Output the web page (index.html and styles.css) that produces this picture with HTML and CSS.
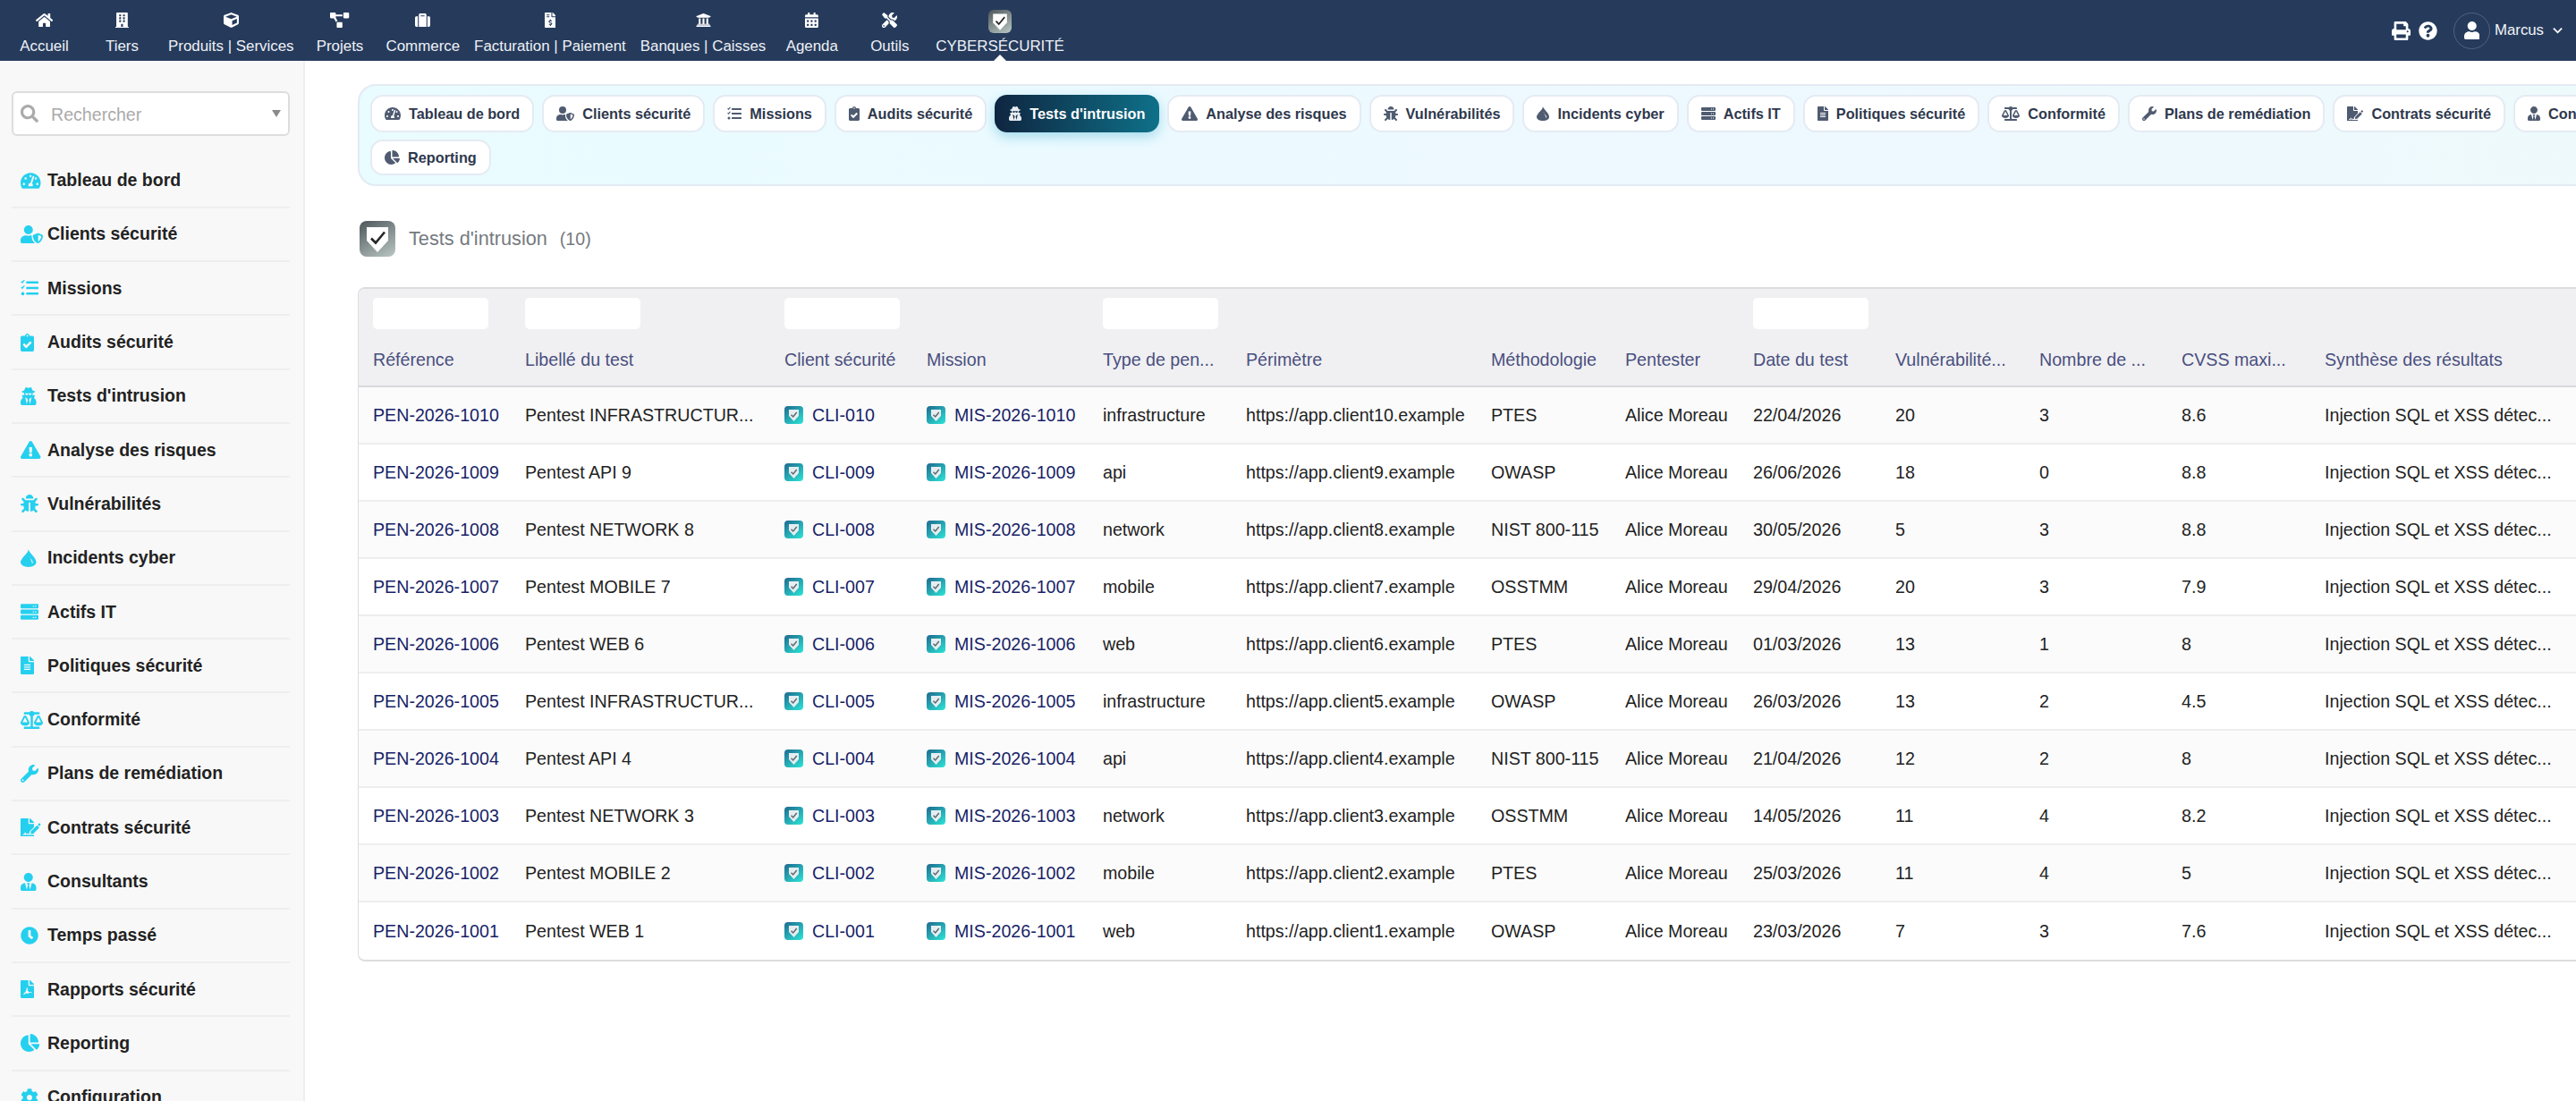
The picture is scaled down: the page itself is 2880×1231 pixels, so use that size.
FILE: index.html
```html
<!DOCTYPE html>
<html lang="fr">
<head>
<meta charset="utf-8">
<title>Tests d'intrusion</title>
<link rel="stylesheet" href="styles.css">
</head>
<body>
<svg class="sprite" width="0" height="0" aria-hidden="true">
<defs>
<linearGradient id="gGray" x1="0.2" y1="0" x2="0.8" y2="1"><stop offset="0" stop-color="#555f63"/><stop offset="1" stop-color="#b3bfbc"/></linearGradient>
<linearGradient id="gTeal" x1="0.1" y1="0" x2="0.9" y2="1"><stop offset="0" stop-color="#1f6f92"/><stop offset="1" stop-color="#2be0d4"/></linearGradient>
<symbol id="shield-check" viewBox="0 0 40 40"><path d="M8 7h24v15L20 35 8 22z" fill="#fff"/><path d="M13 19.5l5 5 10-12" fill="none" stroke="#262626" stroke-width="2.6"/></symbol>
<symbol id="shield-soft" viewBox="0 0 40 40"><path d="M9 8h22v14L20 34 9 22z" fill="#e6edf0"/><path d="M14 19.5l4.5 4.5 8-10" fill="none" stroke="#5d6a70" stroke-width="3"/></symbol>
<g id="i-home"><path d="M280.37 148.26L96 300.11V464a16 16 0 0 0 16 16l112.06-.29a16 16 0 0 0 15.92-16V368a16 16 0 0 1 16-16h64a16 16 0 0 1 16 16v95.64a16 16 0 0 0 16 16.05L464 480a16 16 0 0 0 16-16V300L295.67 148.26a12.19 12.19 0 0 0-15.3 0zM571.6 251.47L488 182.56V44.05a12 12 0 0 0-12-12h-56a12 12 0 0 0-12 12v72.61L318.47 43a48 48 0 0 0-61 0L4.34 251.47a12 12 0 0 0-1.6 16.9l25.5 31A12 12 0 0 0 45.15 301l235.22-193.74a12.19 12.19 0 0 1 15.3 0L530.9 301a12 12 0 0 0 16.9-1.6l25.5-31a12 12 0 0 0-1.7-16.93z"/></g>
<g id="i-building"><path d="M436 480h-20V24c0-13.255-10.745-24-24-24H56C42.745 0 32 10.745 32 24v456H12c-6.627 0-12 5.373-12 12v20h448v-20c0-6.627-5.373-12-12-12zM128 76c0-6.627 5.373-12 12-12h40c6.627 0 12 5.373 12 12v40c0 6.627-5.373 12-12 12h-40c-6.627 0-12-5.373-12-12V76zm0 96c0-6.627 5.373-12 12-12h40c6.627 0 12 5.373 12 12v40c0 6.627-5.373 12-12 12h-40c-6.627 0-12-5.373-12-12v-40zm52 148h-40c-6.627 0-12-5.373-12-12v-40c0-6.627 5.373-12 12-12h40c6.627 0 12 5.373 12 12v40c0 6.627-5.373 12-12 12zm76 160h-64v-84c0-6.627 5.373-12 12-12h40c6.627 0 12 5.373 12 12v84zm64-172c0 6.627-5.373 12-12 12h-40c-6.627 0-12-5.373-12-12v-40c0-6.627 5.373-12 12-12h40c6.627 0 12 5.373 12 12v40zm0-96c0 6.627-5.373 12-12 12h-40c-6.627 0-12-5.373-12-12v-40c0-6.627 5.373-12 12-12h40c6.627 0 12 5.373 12 12v40zm0-96c0 6.627-5.373 12-12 12h-40c-6.627 0-12-5.373-12-12V76c0-6.627 5.373-12 12-12h40c6.627 0 12 5.373 12 12v40z"/></g>
<g id="i-cube"><path d="M239.1 6.3l-208 78c-18.7 7-31.1 25-31.1 45v225.1c0 18.2 10.3 34.8 26.5 42.9l208 104c13.5 6.8 29.4 6.8 42.9 0l208-104c16.3-8.1 26.5-24.8 26.5-42.9V129.3c0-20-12.4-37.9-31.1-44.9l-208-78C262 2.2 250 2.2 239.1 6.3zM256 68.4l192 72v1.1l-192 78-192-78v-1.1l192-72zm32 356V275.5l160-65v133.9l-160 80z"/></g>
<g id="i-diagram"><path d="M384 320H256c-17.67 0-32 14.33-32 32v128c0 17.67 14.33 32 32 32h128c17.67 0 32-14.33 32-32V352c0-17.67-14.33-32-32-32zM192 32c0-17.67-14.33-32-32-32H32C14.33 0 0 14.33 0 32v128c0 17.67 14.33 32 32 32h95.72l73.16 128.04C211.98 300.98 232.4 288 256 288h.28L192 175.51V128h224V64H192V32zM608 0H480c-17.67 0-32 14.33-32 32v128c0 17.67 14.33 32 32 32h128c17.67 0 32-14.33 32-32V32c0-17.67-14.33-32-32-32z"/></g>
<g id="i-suitcase"><path d="M128 480h256V80c0-26.5-21.5-48-48-48H176c-26.5 0-48 21.5-48 48v400zm64-384h128v32H192V96zm320 80v256c0 26.5-21.5 48-48 48h-48V128h48c26.5 0 48 21.5 48 48zM96 480H48c-26.5 0-48-21.5-48-48V176c0-26.5 21.5-48 48-48h48v352z"/></g>
<g id="i-invoice"><path d="M377 105L279.1 7c-4.5-4.5-10.6-7-17-7H256v128h128v-6.1c0-6.3-2.5-12.4-7-16.9zM224 136V0H24C10.7 0 0 10.7 0 24v464c0 13.3 10.7 24 24 24h336c13.3 0 24-10.7 24-24V160H248c-13.2 0-24-10.8-24-24zM64 72c0-4.4 3.6-8 8-8h80c4.4 0 8 3.6 8 8v16c0 4.4-3.6 8-8 8H72c-4.4 0-8-3.6-8-8V72zm0 80v-16c0-4.4 3.6-8 8-8h80c4.4 0 8 3.6 8 8v16c0 4.4-3.6 8-8 8H72c-4.4 0-8-3.6-8-8zm144 263.9V440c0 4.4-3.6 8-8 8h-16c-4.4 0-8-3.6-8-8v-24.3c-11.3-.6-22.3-4.5-31.4-11.4-3.9-2.9-4.1-8.8-.6-12.1l11.8-11.2c2.8-2.6 6.9-2.8 10.1-.7 3.9 2.4 8.3 3.7 12.8 3.7h28.1c6.5 0 11.8-5.9 11.8-13.2 0-6-3.6-11.2-8.8-12.8l-45-13.5c-18.6-5.6-31.6-23.4-31.6-43.4 0-24.5 19.1-44.4 42.8-45.1V240c0-4.4 3.6-8 8-8h16c4.4 0 8 3.6 8 8v24.3c11.3.6 22.3 4.5 31.4 11.4 3.9 2.9 4.1 8.8.6 12.1l-11.8 11.2c-2.8 2.6-6.9 2.8-10.1.7-3.9-2.4-8.3-3.7-12.8-3.7h-28.1c-6.5 0-11.8 5.9-11.8 13.2 0 6 3.6 11.2 8.8 12.8l45 13.5c18.6 5.6 31.6 23.4 31.6 43.4 0 24.5-19.1 44.4-42.8 45z"/></g>
<g id="i-bank"><path d="M496 128v16a8 8 0 0 1-8 8h-24v12c0 6.627-5.373 12-12 12H60c-6.627 0-12-5.373-12-12v-12H24a8 8 0 0 1-8-8v-16a8 8 0 0 1 4.941-7.392l232-88a7.996 7.996 0 0 1 6.118 0l232 88A8 8 0 0 1 496 128zm-24 304H40c-13.255 0-24 10.745-24 24v16a8 8 0 0 0 8 8h464a8 8 0 0 0 8-8v-16c0-13.255-10.745-24-24-24zM96 192v192H60c-6.627 0-12 5.373-12 12v20h416v-20c0-6.627-5.373-12-12-12h-36V192h-64v192h-64V192h-64v192h-64V192H96z"/></g>
<g id="i-calendar"><path d="M0 464c0 26.5 21.5 48 48 48h352c26.5 0 48-21.5 48-48V192H0v272zm320-196c0-6.6 5.4-12 12-12h40c6.6 0 12 5.4 12 12v40c0 6.6-5.4 12-12 12h-40c-6.6 0-12-5.4-12-12v-40zm0 128c0-6.6 5.4-12 12-12h40c6.6 0 12 5.4 12 12v40c0 6.6-5.4 12-12 12h-40c-6.6 0-12-5.4-12-12v-40zM192 268c0-6.6 5.4-12 12-12h40c6.6 0 12 5.4 12 12v40c0 6.6-5.4 12-12 12h-40c-6.6 0-12-5.4-12-12v-40zm0 128c0-6.6 5.4-12 12-12h40c6.6 0 12 5.4 12 12v40c0 6.6-5.4 12-12 12h-40c-6.6 0-12-5.4-12-12v-40zM64 268c0-6.6 5.4-12 12-12h40c6.6 0 12 5.4 12 12v40c0 6.6-5.4 12-12 12H76c-6.6 0-12-5.4-12-12v-40zm0 128c0-6.6 5.4-12 12-12h40c6.6 0 12 5.4 12 12v40c0 6.6-5.4 12-12 12H76c-6.6 0-12-5.4-12-12v-40zM400 64h-48V16c0-8.8-7.2-16-16-16h-32c-8.8 0-16 7.2-16 16v48H160V16c0-8.8-7.2-16-16-16h-32c-8.8 0-16 7.2-16 16v48H48C21.5 64 0 85.5 0 112v48h448v-48c0-26.5-21.5-48-48-48z"/></g>
<g id="i-tools"><path d="M501.1 395.7L384 278.6c-23.1-23.1-57.6-27.6-85.4-13.9L192 158.1V96L64 0 0 64l96 128h62.1l106.6 106.6c-13.6 27.8-9.2 62.3 13.9 85.4l117.1 117.1c14.6 14.6 38.2 14.6 52.7 0l52.7-52.7c14.5-14.6 14.5-38.2 0-52.7zM331.7 225c28.3 0 54.9 11 74.9 31l19.4 19.4c15.8-6.9 30.8-16.5 43.8-29.5 37.1-37.1 49.7-89.3 37.9-136.7-2.2-9-13.5-12.1-20.1-5.5l-74.4 74.4-67.9-11.3L334 98.9l74.4-74.4c6.6-6.6 3.4-17.9-5.7-20.2-47.4-11.7-99.6.9-136.6 37.9-28.5 28.5-41.9 66.1-41.2 103.6l82.1 82.1c8.1-1.9 16.5-2.9 24.7-2.9zm-103.9 82l-56.7-56.7L18.7 402.8c-25 25-25 65.5 0 90.5s65.5 25 90.5 0l123.6-123.6c-7.6-19.9-9.9-41.6-5-62.7zM64 472c-13.2 0-24-10.8-24-24 0-13.3 10.7-24 24-24s24 10.7 24 24c0 13.2-10.7 24-24 24z"/></g>
<g id="i-print"><path d="M448 192V77.25c0-8.49-3.37-16.62-9.37-22.63L393.37 9.37c-6-6-14.14-9.37-22.63-9.37H96C78.33 0 64 14.33 64 32v160c-35.35 0-64 28.65-64 64v112c0 8.84 7.16 16 16 16h48v96c0 17.67 14.33 32 32 32h320c17.67 0 32-14.33 32-32v-96h48c8.84 0 16-7.16 16-16V256c0-35.35-28.65-64-64-64zm-64 256H128v-96h256v96zm0-224H128V64h192v48c0 8.84 7.16 16 16 16h48v96zm48 72c-13.25 0-24-10.75-24-24 0-13.26 10.75-24 24-24s24 10.74 24 24c0 13.25-10.75 24-24 24z"/></g>
<g id="i-question"><path d="M504 256c0 136.997-111.043 248-248 248S8 392.997 8 256C8 119.083 119.043 8 256 8s248 111.083 248 248zM262.655 90c-54.497 0-89.255 22.957-116.549 63.758-3.536 5.286-2.353 12.415 2.715 16.258l34.699 26.31c5.205 3.947 12.621 3.008 16.665-2.122 17.864-22.658 30.113-35.797 57.303-35.797 20.429 0 45.698 13.148 45.698 32.958 0 14.976-12.363 22.667-32.534 33.976C247.128 238.528 216 254.941 216 296v4c0 6.627 5.373 12 12 12h56c6.627 0 12-5.373 12-12v-1.333c0-28.462 83.186-29.647 83.186-106.667 0-58.002-60.165-102-116.531-102zM256 338c-25.365 0-46 20.635-46 46 0 25.364 20.635 46 46 46s46-20.636 46-46c0-25.365-20.635-46-46-46z"/></g>
<g id="i-user"><path d="M224 256c70.7 0 128-57.3 128-128S294.7 0 224 0 96 57.3 96 128s57.3 128 128 128zm89.6 32h-16.7c-22.2 10.2-46.9 16-72.9 16s-50.6-5.8-72.9-16h-16.7C60.2 288 0 348.2 0 422.4V464c0 26.5 21.5 48 48 48h352c26.5 0 48-21.5 48-48v-41.6c0-74.2-60.2-134.4-134.4-134.4z"/></g>
<g id="i-search"><path d="M505 442.7L405.3 343c-4.5-4.5-10.6-7-17-7H372c27.6-35.3 44-79.7 44-128C416 93.1 322.9 0 208 0S0 93.1 0 208s93.1 208 208 208c48.3 0 92.7-16.4 128-44v16.3c0 6.4 2.5 12.5 7 17l99.7 99.7c9.4 9.4 24.6 9.4 33.9 0l28.3-28.3c9.4-9.4 9.4-24.6.1-34zM208 336c-70.7 0-128-57.2-128-128 0-70.7 57.2-128 128-128 70.7 0 128 57.2 128 128 0 70.7-57.2 128-128 128z"/></g>
<g id="i-gauge"><path d="M288 32C128.94 32 0 160.94 0 320c0 52.8 14.25 102.26 39.06 144.8 5.61 9.62 16.3 15.2 27.44 15.2h443c11.14 0 21.83-5.58 27.44-15.2C561.75 422.26 576 372.8 576 320c0-159.06-128.94-288-288-288zm0 64c14.71 0 26.58 10.13 30.32 23.65-1.11 2.26-2.64 4.23-3.45 6.67l-9.22 27.67c-5.13 3.49-10.97 6.01-17.64 6.01-17.67 0-32-14.33-32-32S270.33 96 288 96zM96 384c-17.67 0-32-14.33-32-32s14.33-32 32-32 32 14.33 32 32-14.33 32-32 32zm48-160c-17.67 0-32-14.33-32-32s14.33-32 32-32 32 14.33 32 32-14.33 32-32 32zm246.77-72.41l-61.33 184C343.13 347.33 352 364.54 352 384c0 11.72-3.38 22.55-8.88 32H232.88c-5.5-9.45-8.88-20.28-8.88-32 0-33.94 26.5-61.43 59.9-63.59l61.34-184.01c4.17-12.56 17.73-19.45 30.36-15.17 12.57 4.19 19.35 17.79 15.17 30.36zm14.66 57.2l15.52-46.55c3.47-1.29 7.13-2.23 11.05-2.23 17.67 0 32 14.33 32 32s-14.33 32-32 32c-11.38-.01-20.89-6.28-26.57-15.22zM480 384c-17.67 0-32-14.33-32-32s14.33-32 32-32 32 14.33 32 32-14.33 32-32 32z"/></g>
<g id="i-usershield"><path d="M224 256a128 128 0 1 0 0-256 128 128 0 0 0 0 256zM320 320c0-9 0-18 4-26-9-3-20-6-31-6h-17c-16 7-34 12-52 12s-36-5-52-12h-17C60 288 0 348 0 422v42c0 26 22 48 48 48h352c6 0 11-1 16-3-58-35-96-105-96-189z"/><path fill-rule="evenodd" d="M622 270l-115-45c-7-3-15-3-22 0l-115 45c-11 4-18 14-18 25 0 112 69 189 133 214 7 3 15 3 22 0 51-20 133-89 133-214 0-11-7-21-18-25zm-118 190V272l88 34c-2 80-50 132-88 154z"/></g>
<g id="i-tasks"><path d="M176 64h320a16 16 0 0 1 16 16v32a16 16 0 0 1-16 16H176a16 16 0 0 1-16-16V80a16 16 0 0 1 16-16zM176 224h320a16 16 0 0 1 16 16v32a16 16 0 0 1-16 16H176a16 16 0 0 1-16-16v-32a16 16 0 0 1 16-16zM176 384h320a16 16 0 0 1 16 16v32a16 16 0 0 1-16 16H176a16 16 0 0 1-16-16v-32a16 16 0 0 1 16-16z"/><circle cx="64" cy="416" r="48"/><path class="stroked" d="M18 72l32 30 60-72M18 232l32 30 60-72"/></g>
<g id="i-clipboard"><path d="M336 64h-80c0-35-29-64-64-64s-64 29-64 64H48C21 64 0 85 0 112v352c0 26 21 48 48 48h288c26 0 48-22 48-48V112c0-27-22-48-48-48zM192 40c13 0 24 11 24 24s-11 24-24 24-24-11-24-24 11-24 24-24zm121 230L169 413c-5 5-12 5-17 0l-83-84c-5-5-5-12 0-17l28-28c5-5 12-5 17 0l47 47 107-106c5-5 12-5 17 0l28 28c5 5 5 13 0 17z"/></g>
<g id="i-secret"><path d="M383.9 308.3l23.9-62.6c4-10.5-3.7-21.7-15-21.7h-58.5c11-18.9 17.8-40.6 17.8-64v-.3c39.2-7.8 64-19.1 64-31.7 0-13.3-27.3-25.1-70.1-33-9.2-32.8-27-65.8-40.6-82.8-9.5-11.9-25.9-15.6-39.5-8.8l-27.6 13.8c-9 4.5-19.6 4.5-28.6 0L182.1 3.4c-13.6-6.8-30-3.1-39.5 8.8-13.5 17-31.4 50-40.6 82.8-42.7 7.9-70 19.7-70 33 0 12.6 24.8 23.9 64 31.7v.3c0 23.4 6.8 45.1 17.8 64H56.3c-11.5 0-19.2 11.7-14.7 22.3l25.8 60.2C27.3 329.8 0 372.7 0 422.4v44.8C0 491.9 20.1 512 44.8 512h358.4c24.7 0 44.8-20.1 44.8-44.8v-44.8c0-48.4-25.8-90.4-64.1-114.1zM176 480l-41.6-192 49.6 32 24 40-32 120zm96 0l-32-120 24-40 49.6-32L272 480zm41.7-298.5c-3.9 11.9-7 24.6-16.5 33.4-10.1 9.3-48 22.4-64-25-2.8-8.4-15.4-8.4-18.3 0-17 50.2-56 32.4-64 25-9.5-8.8-12.7-21.5-16.5-33.4-.8-2.5-6.3-5.7-6.3-5.8v-10.8c28.3 3.6 61 5.8 96 5.8s67.7-2.1 96-5.8v10.8c-.1.1-5.6 3.2-6.4 5.8z"/></g>
<g id="i-warning"><path d="M569.517 440.013C587.975 472.007 564.806 512 527.94 512H48.054c-36.937 0-59.999-40.055-41.577-71.987L246.423 23.985c18.467-32.009 64.72-31.951 83.154 0l239.94 416.028zM288 354c-25.405 0-46 20.595-46 46s20.595 46 46 46 46-20.595 46-46-20.595-46-46-46zm-43.673-165.346l7.418 136c.347 6.364 5.609 11.346 11.982 11.346h48.546c6.373 0 11.635-4.982 11.982-11.346l7.418-136c.375-6.874-5.098-12.654-11.982-12.654h-63.383c-6.884 0-12.356 5.78-11.981 12.654z"/></g>
<g id="i-bug"><path d="M511.988 288.9c-.478 17.43-15.217 31.1-32.653 31.1H424v16c0 21.864-4.882 42.584-13.6 61.145l60.228 60.228c12.496 12.497 12.496 32.758 0 45.255-12.498 12.497-32.759 12.496-45.256 0l-54.736-54.736C345.886 467.965 314.351 480 280 480V236c0-6.627-5.373-12-12-12h-24c-6.627 0-12 5.373-12 12v244c-34.351 0-65.886-12.035-90.636-32.108l-54.736 54.736c-12.498 12.497-32.759 12.496-45.256 0-12.496-12.497-12.496-32.758 0-45.255l60.228-60.228C92.882 378.584 88 357.864 88 336v-16H32.666C15.23 320 .491 306.33.013 288.9-.484 270.816 14.028 256 32 256h56v-58.745l-46.628-46.628c-12.496-12.497-12.496-32.758 0-45.255 12.498-12.497 32.758-12.497 45.256 0L141.255 160h229.489l54.627-54.627c12.498-12.497 32.758-12.497 45.256 0 12.496 12.497 12.496 32.758 0 45.255L424 197.255V256h56c17.972 0 32.484 14.816 31.988 32.9zM257 0c-61.856 0-112 50.144-112 112h224C369 50.144 318.856 0 257 0z"/></g>
<g id="i-fire"><path fill-rule="evenodd" d="M216 0C240 90 110 170 60 250 20 310 0 340 0 372c0 80 100 140 224 140s224-60 224-140c0-130-170-230-232-372zM250 190c-10 70 100 110 100 180 0 20-8 36-20 50 4-70-50-120-80-230z"/></g>
<g id="i-server"><path fill-rule="evenodd" d="M32 32h448a32 32 0 0 1 32 32v64a32 32 0 0 1-32 32H32a32 32 0 0 1-32-32V64a32 32 0 0 1 32-32zM416 80v32h32V80zM352 80v32h32V80zM32 192h448a32 32 0 0 1 32 32v64a32 32 0 0 1-32 32H32a32 32 0 0 1-32-32v-64a32 32 0 0 1 32-32zM416 240v32h32v-32zM352 240v32h32v-32zM32 352h448a32 32 0 0 1 32 32v64a32 32 0 0 1-32 32H32a32 32 0 0 1-32-32v-64a32 32 0 0 1 32-32zM416 400v32h32v-32zM352 400v32h32v-32z"/></g>
<g id="i-file"><path d="M224 136V0H24C10.7 0 0 10.7 0 24v464c0 13.3 10.7 24 24 24h336c13.3 0 24-10.7 24-24V160H248c-13.2 0-24-10.8-24-24zm64 236c0 6.6-5.4 12-12 12H108c-6.6 0-12-5.4-12-12v-8c0-6.6 5.4-12 12-12h168c6.6 0 12 5.4 12 12v8zm0-64c0 6.6-5.4 12-12 12H108c-6.6 0-12-5.4-12-12v-8c0-6.6 5.4-12 12-12h168c6.6 0 12 5.4 12 12v8zm0-72v8c0 6.6-5.4 12-12 12H108c-6.6 0-12-5.4-12-12v-8c0-6.6 5.4-12 12-12h168c6.6 0 12 5.4 12 12zm96-114.1v6.1H256V0h6.1c6.4 0 12.5 2.5 17 7l97.9 98c4.5 4.5 7 10.6 7 16.9z"/></g>
<g id="i-scale"><path d="M256 336h-.02c0-16.18 1.34-8.73-85.05-181.51-17.65-35.29-68.19-35.36-85.87 0C-2.06 328.75.02 320.33.02 336H0c0 44.18 57.31 80 128 80s128-35.82 128-80zM128 176l72 144H56l72-144zm511.98 160c0-16.18 1.34-8.73-85.05-181.51-17.65-35.29-68.19-35.36-85.87 0-87.12 174.26-85.04 165.84-85.04 181.51H384c0 44.18 57.31 80 128 80s128-35.82 128-80h-.02zM440 320l72-144 72 144H440zm88 128H352V153.25c23.51-10.29 41.16-31.48 46.39-57.25H528c8.84 0 16-7.16 16-16V48c0-8.84-7.16-16-16-16H383.64C369.04 12.68 346.09 0 320 0s-49.04 12.68-63.64 32H112c-8.84 0-16 7.16-16 16v32c0 8.84 7.16 16 16 16h129.61c5.23 25.76 22.87 46.96 46.39 57.25V448H112c-8.84 0-16 7.16-16 16v32c0 8.84 7.16 16 16 16h416c8.84 0 16-7.16 16-16v-32c0-8.84-7.16-16-16-16z"/></g>
<g id="i-wrench"><path d="M507.73 109.1c-2.24-9.03-13.54-12.09-20.12-5.51l-74.36 74.36-67.88-11.31-11.31-67.88 74.36-74.36c6.62-6.62 3.43-17.9-5.66-20.16-47.38-11.74-99.55.91-136.58 37.93-39.64 39.64-50.55 97.1-34.05 147.2L18.74 402.76c-24.99 24.99-24.99 65.51 0 90.5 24.99 24.99 65.51 24.99 90.5 0l213.21-213.21c50.12 16.71 107.47 5.68 147.37-34.22 37.07-37.07 49.7-89.32 37.91-136.73zM64 472c-13.25 0-24-10.75-24-24 0-13.26 10.75-24 24-24s24 10.74 24 24c0 13.25-10.75 24-24 24z"/></g>
<g id="i-contract"><path fill-rule="evenodd" d="M0 24C0 11 11 0 24 0h200v136c0 13 11 24 24 24h136v90L270 364c-10 10-16 22-18 36l-6 48-24-4c-14-2-22-14-38-14-12 0-20 8-28 16l-16-44-20 4-16 42H64v32h24l14-34 14 32 10 2c14-2 26-18 40-20 12 2 22 12 38 16h180v40c0 9-11 16-24 16H24c-13 0-24-11-24-24z"/><path d="M256 0h6c6 0 12 2 17 7l98 98c4 5 7 11 7 17v6H256zM294 372L470 196l68 68-176 176-74 10zM490 176l30-30c9-9 24-9 33 0l16 16c9 9 9 24 0 33l-30 30z"/></g>
<g id="i-tie"><path d="M224 256c70.7 0 128-57.3 128-128S294.7 0 224 0 96 57.3 96 128s57.3 128 128 128zm95.8 32.6L272 480l-32-136 32-56h-96l32 56-32 136-47.8-191.4C56.9 292 0 350.3 0 422.4V464c0 26.5 21.5 48 48 48h352c26.5 0 48-21.5 48-48v-41.6c0-72.1-56.9-130.4-128.2-133.8z"/></g>
<g id="i-clock"><path d="M256 8C119 8 8 119 8 256s111 248 248 248 248-111 248-248S393 8 256 8zm57.1 350.1L224.9 294c-3.1-2.3-4.9-5.9-4.9-9.7V116c0-6.6 5.4-12 12-12h48c6.6 0 12 5.4 12 12v137.7l63.5 46.2c5.4 3.9 6.5 11.4 2.6 16.8l-28.2 38.8c-3.9 5.3-11.4 6.5-16.8 2.6z"/></g>
<g id="i-pdf"><path fill-rule="evenodd" d="M224 136V0H24C10.7 0 0 10.7 0 24v464c0 13.3 10.7 24 24 24h336c13.3 0 24-10.7 24-24V160H248c-13.2 0-24-10.8-24-24zM176 216h28l-4 76 42 50c30-4 68-4 84 8v16c-20-6-56-8-82-2-24 8-44 30-58 22l-30-22c-24 22-52 52-68 42l-8-10c14-26 40-46 60-56l24-68z"/><path d="M377 105L279 7c-4.5-4.5-10.6-7-17-7h-6v128h128v-6.1c0-6.3-2.5-12.4-7-16.9z"/></g>
<g id="i-pie"><path d="M527.79 288H290.5l158.03 158.03c6.04 6.04 15.98 6.53 22.19.68 38.7-36.46 65.32-85.61 73.13-140.86 1.34-9.46-6.51-17.85-16.06-17.85zm-15.83-64.8C503.72 103.74 408.26 8.28 288.8.04 279.68-.59 272 7.1 272 16.24V240h223.77c9.14 0 16.82-7.68 16.19-16.8zM224 288V50.71c0-9.55-8.39-17.4-17.84-16.06C86.99 51.49-4.1 155.6.14 280.37 4.5 408.51 114.83 513.59 243.03 511.98c50.4-.63 96.97-16.87 135.26-44.03 7.9-5.6 8.42-17.23 1.57-24.08L224 288z"/></g>
<g id="i-cog"><path d="M487.4 315.7l-42.6-24.6c4.3-23.2 4.3-47 0-70.2l42.6-24.6c4.9-2.8 7.1-8.6 5.5-14-11.1-35.6-30-67.8-54.7-94.6-3.8-4.1-10-5.1-14.8-2.3L380.8 110c-17.9-15.4-38.5-27.3-60.8-35.1V25.8c0-5.6-3.9-10.5-9.4-11.7-36.7-8.2-74.3-7.8-109.2 0-5.5 1.2-9.4 6.1-9.4 11.7V75c-22.2 7.9-42.8 19.8-60.8 35.1L88.7 85.5c-4.9-2.8-11-1.9-14.8 2.3-24.7 26.7-43.6 58.9-54.7 94.6-1.7 5.4.6 11.2 5.5 14L67.3 221c-4.3 23.2-4.3 47 0 70.2l-42.6 24.6c-4.9 2.8-7.1 8.6-5.5 14 11.1 35.6 30 67.8 54.7 94.6 3.8 4.1 10 5.1 14.8 2.3l42.6-24.6c17.9 15.4 38.5 27.3 60.8 35.1v49.2c0 5.6 3.9 10.5 9.4 11.7 36.7 8.2 74.3 7.8 109.2 0 5.5-1.2 9.4-6.1 9.4-11.7v-49.2c22.2-7.9 42.8-19.8 60.8-35.1l42.6 24.6c4.9 2.8 11 1.9 14.8-2.3 24.7-26.7 43.6-58.9 54.7-94.6 1.5-5.5-.7-11.3-5.6-14.1zM256 336c-44.1 0-80-35.9-80-80s35.9-80 80-80 80 35.9 80 80-35.9 80-80 80z"/></g>
</defs>
</svg>

<header class="topbar">
  <nav class="topnav">
    <a class="topitem"><svg class="ic" viewBox="0 0 576 512"><use href="#i-home"/></svg><span>Accueil</span></a>
    <a class="topitem"><svg class="ic" viewBox="0 0 448 512"><use href="#i-building"/></svg><span>Tiers</span></a>
    <a class="topitem"><svg class="ic" viewBox="0 0 512 512"><use href="#i-cube"/></svg><span>Produits | Services</span></a>
    <a class="topitem"><svg class="ic" viewBox="0 0 640 512"><use href="#i-diagram"/></svg><span>Projets</span></a>
    <a class="topitem"><svg class="ic" viewBox="0 0 512 512"><use href="#i-suitcase"/></svg><span>Commerce</span></a>
    <a class="topitem"><svg class="ic" viewBox="0 0 384 512"><use href="#i-invoice"/></svg><span>Facturation | Paiement</span></a>
    <a class="topitem"><svg class="ic" viewBox="0 0 512 512"><use href="#i-bank"/></svg><span>Banques | Caisses</span></a>
    <a class="topitem"><svg class="ic" viewBox="0 0 448 512"><use href="#i-calendar"/></svg><span>Agenda</span></a>
    <a class="topitem"><svg class="ic" viewBox="0 0 512 512"><use href="#i-tools"/></svg><span>Outils</span></a>
    <a class="topitem is-current"><svg class="badge badge-nav"><rect width="100%" height="100%" rx="6" fill="url(#gGray)"/><use href="#shield-check"/></svg><span>CYBERSÉCURITÉ</span></a>
  </nav>
  <div class="toptools">
    <svg class="tool" viewBox="0 0 512 512"><use href="#i-print"/></svg>
    <svg class="tool" viewBox="0 0 512 512"><use href="#i-question"/></svg>
    <span class="avatar"><svg class="avatar-ic" viewBox="0 0 448 512"><use href="#i-user"/></svg></span>
    <span class="username">Marcus</span>
    <svg class="chev" viewBox="0 0 12 8"><path d="M1 1.5l5 5 5-5"/></svg>
  </div>
</header>

<div class="shell">
  <aside class="sidebar">
    <div class="search">
      <svg class="search-ic" viewBox="0 0 512 512"><use href="#i-search"/></svg>
      <span class="search-ph">Rechercher</span>
      <span class="search-caret"></span>
    </div>
    <ul class="sidelist">
      <li><a class="sidelink"><span class="sidebox"><svg viewBox="0 0 576 512"><use href="#i-gauge"/></svg></span>Tableau de bord</a></li>
      <li><a class="sidelink"><span class="sidebox"><svg viewBox="0 0 640 512"><use href="#i-usershield"/></svg></span>Clients sécurité</a></li>
      <li><a class="sidelink"><span class="sidebox"><svg viewBox="0 0 512 512"><use href="#i-tasks"/></svg></span>Missions</a></li>
      <li><a class="sidelink"><span class="sidebox"><svg viewBox="0 0 384 512"><use href="#i-clipboard"/></svg></span>Audits sécurité</a></li>
      <li><a class="sidelink"><span class="sidebox"><svg viewBox="0 0 448 512"><use href="#i-secret"/></svg></span>Tests d'intrusion</a></li>
      <li><a class="sidelink"><span class="sidebox"><svg viewBox="0 0 576 512"><use href="#i-warning"/></svg></span>Analyse des risques</a></li>
      <li><a class="sidelink"><span class="sidebox"><svg viewBox="0 0 512 512"><use href="#i-bug"/></svg></span>Vulnérabilités</a></li>
      <li><a class="sidelink"><span class="sidebox"><svg viewBox="0 0 448 512"><use href="#i-fire"/></svg></span>Incidents cyber</a></li>
      <li><a class="sidelink"><span class="sidebox"><svg viewBox="0 0 512 512"><use href="#i-server"/></svg></span>Actifs IT</a></li>
      <li><a class="sidelink"><span class="sidebox"><svg viewBox="0 0 384 512"><use href="#i-file"/></svg></span>Politiques sécurité</a></li>
      <li><a class="sidelink"><span class="sidebox"><svg viewBox="0 0 640 512"><use href="#i-scale"/></svg></span>Conformité</a></li>
      <li><a class="sidelink"><span class="sidebox"><svg viewBox="0 0 512 512"><use href="#i-wrench"/></svg></span>Plans de remédiation</a></li>
      <li><a class="sidelink"><span class="sidebox"><svg viewBox="0 0 576 512"><use href="#i-contract"/></svg></span>Contrats sécurité</a></li>
      <li><a class="sidelink"><span class="sidebox"><svg viewBox="0 0 448 512"><use href="#i-tie"/></svg></span>Consultants</a></li>
      <li><a class="sidelink"><span class="sidebox"><svg viewBox="0 0 512 512"><use href="#i-clock"/></svg></span>Temps passé</a></li>
      <li><a class="sidelink"><span class="sidebox"><svg viewBox="0 0 384 512"><use href="#i-pdf"/></svg></span>Rapports sécurité</a></li>
      <li><a class="sidelink"><span class="sidebox"><svg viewBox="0 0 544 512"><use href="#i-pie"/></svg></span>Reporting</a></li>
      <li><a class="sidelink"><span class="sidebox"><svg viewBox="0 0 512 512"><use href="#i-cog"/></svg></span>Configuration</a></li>
    </ul>
  </aside>

  <main class="content">
    <div class="tabpanel">
      <a class="tab"><svg viewBox="0 0 576 512"><use href="#i-gauge"/></svg>Tableau de bord</a>
      <a class="tab"><svg viewBox="0 0 640 512"><use href="#i-usershield"/></svg>Clients sécurité</a>
      <a class="tab"><svg viewBox="0 0 512 512"><use href="#i-tasks"/></svg>Missions</a>
      <a class="tab"><svg viewBox="0 0 384 512"><use href="#i-clipboard"/></svg>Audits sécurité</a>
      <a class="tab tab-active"><svg viewBox="0 0 448 512"><use href="#i-secret"/></svg>Tests d'intrusion</a>
      <a class="tab"><svg viewBox="0 0 576 512"><use href="#i-warning"/></svg>Analyse des risques</a>
      <a class="tab"><svg viewBox="0 0 512 512"><use href="#i-bug"/></svg>Vulnérabilités</a>
      <a class="tab"><svg viewBox="0 0 448 512"><use href="#i-fire"/></svg>Incidents cyber</a>
      <a class="tab"><svg viewBox="0 0 512 512"><use href="#i-server"/></svg>Actifs IT</a>
      <a class="tab"><svg viewBox="0 0 384 512"><use href="#i-file"/></svg>Politiques sécurité</a>
      <a class="tab"><svg viewBox="0 0 640 512"><use href="#i-scale"/></svg>Conformité</a>
      <a class="tab"><svg viewBox="0 0 512 512"><use href="#i-wrench"/></svg>Plans de remédiation</a>
      <a class="tab"><svg viewBox="0 0 576 512"><use href="#i-contract"/></svg>Contrats sécurité</a>
      <a class="tab"><svg viewBox="0 0 448 512"><use href="#i-tie"/></svg>Consultants</a>
      <a class="tab"><svg viewBox="0 0 512 512"><use href="#i-clock"/></svg>Temps passé</a>
      <a class="tab"><svg viewBox="0 0 384 512"><use href="#i-pdf"/></svg>Rapports sécurité</a>
      <a class="tab"><svg viewBox="0 0 544 512"><use href="#i-pie"/></svg>Reporting</a>
    </div>

    <div class="titlerow">
      <svg class="badge badge-title"><rect width="100%" height="100%" rx="8" fill="url(#gGray)"/><use href="#shield-check"/></svg>
      <h1 class="title">Tests d'intrusion</h1>
      <span class="count">(10)</span>
    </div>

    <div class="tablewrap">
      <table class="datatable">
        <colgroup>
          <col class="c1"><col class="c2"><col class="c3"><col class="c4"><col class="c5"><col class="c6"><col class="c7"><col class="c8"><col class="c9"><col class="c10"><col class="c11"><col class="c12"><col class="c13">
        </colgroup>
        <thead>
          <tr class="filters">
            <td><input class="filter"></td><td><input class="filter"></td><td><input class="filter"></td><td></td><td><input class="filter"></td><td></td><td></td><td></td><td><input class="filter"></td><td></td><td></td><td></td><td></td>
          </tr>
          <tr class="labels">
            <th>Référence</th><th>Libellé du test</th><th>Client sécurité</th><th>Mission</th><th>Type de pen...</th><th>Périmètre</th><th>Méthodologie</th><th>Pentester</th><th>Date du test</th><th>Vulnérabilité...</th><th>Nombre de ...</th><th>CVSS maxi...</th><th>Synthèse des résultats</th>
          </tr>
        </thead>
        <tbody>
          <tr><td><a class="lnk">PEN-2026-1010</a></td><td>Pentest INFRASTRUCTUR...</td><td><a class="lnk ref"><svg class="badge badge-row"><rect width="100%" height="100%" rx="4" fill="url(#gTeal)"/><use href="#shield-soft"/></svg>CLI-010</a></td><td><a class="lnk ref"><svg class="badge badge-row"><rect width="100%" height="100%" rx="4" fill="url(#gTeal)"/><use href="#shield-soft"/></svg>MIS-2026-1010</a></td><td>infrastructure</td><td>https://app.client10.example</td><td>PTES</td><td>Alice Moreau</td><td>22/04/2026</td><td>20</td><td>3</td><td>8.6</td><td>Injection SQL et XSS détec...</td></tr>
          <tr><td><a class="lnk">PEN-2026-1009</a></td><td>Pentest API 9</td><td><a class="lnk ref"><svg class="badge badge-row"><rect width="100%" height="100%" rx="4" fill="url(#gTeal)"/><use href="#shield-soft"/></svg>CLI-009</a></td><td><a class="lnk ref"><svg class="badge badge-row"><rect width="100%" height="100%" rx="4" fill="url(#gTeal)"/><use href="#shield-soft"/></svg>MIS-2026-1009</a></td><td>api</td><td>https://app.client9.example</td><td>OWASP</td><td>Alice Moreau</td><td>26/06/2026</td><td>18</td><td>0</td><td>8.8</td><td>Injection SQL et XSS détec...</td></tr>
          <tr><td><a class="lnk">PEN-2026-1008</a></td><td>Pentest NETWORK 8</td><td><a class="lnk ref"><svg class="badge badge-row"><rect width="100%" height="100%" rx="4" fill="url(#gTeal)"/><use href="#shield-soft"/></svg>CLI-008</a></td><td><a class="lnk ref"><svg class="badge badge-row"><rect width="100%" height="100%" rx="4" fill="url(#gTeal)"/><use href="#shield-soft"/></svg>MIS-2026-1008</a></td><td>network</td><td>https://app.client8.example</td><td>NIST 800-115</td><td>Alice Moreau</td><td>30/05/2026</td><td>5</td><td>3</td><td>8.8</td><td>Injection SQL et XSS détec...</td></tr>
          <tr><td><a class="lnk">PEN-2026-1007</a></td><td>Pentest MOBILE 7</td><td><a class="lnk ref"><svg class="badge badge-row"><rect width="100%" height="100%" rx="4" fill="url(#gTeal)"/><use href="#shield-soft"/></svg>CLI-007</a></td><td><a class="lnk ref"><svg class="badge badge-row"><rect width="100%" height="100%" rx="4" fill="url(#gTeal)"/><use href="#shield-soft"/></svg>MIS-2026-1007</a></td><td>mobile</td><td>https://app.client7.example</td><td>OSSTMM</td><td>Alice Moreau</td><td>29/04/2026</td><td>20</td><td>3</td><td>7.9</td><td>Injection SQL et XSS détec...</td></tr>
          <tr><td><a class="lnk">PEN-2026-1006</a></td><td>Pentest WEB 6</td><td><a class="lnk ref"><svg class="badge badge-row"><rect width="100%" height="100%" rx="4" fill="url(#gTeal)"/><use href="#shield-soft"/></svg>CLI-006</a></td><td><a class="lnk ref"><svg class="badge badge-row"><rect width="100%" height="100%" rx="4" fill="url(#gTeal)"/><use href="#shield-soft"/></svg>MIS-2026-1006</a></td><td>web</td><td>https://app.client6.example</td><td>PTES</td><td>Alice Moreau</td><td>01/03/2026</td><td>13</td><td>1</td><td>8</td><td>Injection SQL et XSS détec...</td></tr>
          <tr><td><a class="lnk">PEN-2026-1005</a></td><td>Pentest INFRASTRUCTUR...</td><td><a class="lnk ref"><svg class="badge badge-row"><rect width="100%" height="100%" rx="4" fill="url(#gTeal)"/><use href="#shield-soft"/></svg>CLI-005</a></td><td><a class="lnk ref"><svg class="badge badge-row"><rect width="100%" height="100%" rx="4" fill="url(#gTeal)"/><use href="#shield-soft"/></svg>MIS-2026-1005</a></td><td>infrastructure</td><td>https://app.client5.example</td><td>OWASP</td><td>Alice Moreau</td><td>26/03/2026</td><td>13</td><td>2</td><td>4.5</td><td>Injection SQL et XSS détec...</td></tr>
          <tr><td><a class="lnk">PEN-2026-1004</a></td><td>Pentest API 4</td><td><a class="lnk ref"><svg class="badge badge-row"><rect width="100%" height="100%" rx="4" fill="url(#gTeal)"/><use href="#shield-soft"/></svg>CLI-004</a></td><td><a class="lnk ref"><svg class="badge badge-row"><rect width="100%" height="100%" rx="4" fill="url(#gTeal)"/><use href="#shield-soft"/></svg>MIS-2026-1004</a></td><td>api</td><td>https://app.client4.example</td><td>NIST 800-115</td><td>Alice Moreau</td><td>21/04/2026</td><td>12</td><td>2</td><td>8</td><td>Injection SQL et XSS détec...</td></tr>
          <tr><td><a class="lnk">PEN-2026-1003</a></td><td>Pentest NETWORK 3</td><td><a class="lnk ref"><svg class="badge badge-row"><rect width="100%" height="100%" rx="4" fill="url(#gTeal)"/><use href="#shield-soft"/></svg>CLI-003</a></td><td><a class="lnk ref"><svg class="badge badge-row"><rect width="100%" height="100%" rx="4" fill="url(#gTeal)"/><use href="#shield-soft"/></svg>MIS-2026-1003</a></td><td>network</td><td>https://app.client3.example</td><td>OSSTMM</td><td>Alice Moreau</td><td>14/05/2026</td><td>11</td><td>4</td><td>8.2</td><td>Injection SQL et XSS détec...</td></tr>
          <tr><td><a class="lnk">PEN-2026-1002</a></td><td>Pentest MOBILE 2</td><td><a class="lnk ref"><svg class="badge badge-row"><rect width="100%" height="100%" rx="4" fill="url(#gTeal)"/><use href="#shield-soft"/></svg>CLI-002</a></td><td><a class="lnk ref"><svg class="badge badge-row"><rect width="100%" height="100%" rx="4" fill="url(#gTeal)"/><use href="#shield-soft"/></svg>MIS-2026-1002</a></td><td>mobile</td><td>https://app.client2.example</td><td>PTES</td><td>Alice Moreau</td><td>25/03/2026</td><td>11</td><td>4</td><td>5</td><td>Injection SQL et XSS détec...</td></tr>
          <tr><td><a class="lnk">PEN-2026-1001</a></td><td>Pentest WEB 1</td><td><a class="lnk ref"><svg class="badge badge-row"><rect width="100%" height="100%" rx="4" fill="url(#gTeal)"/><use href="#shield-soft"/></svg>CLI-001</a></td><td><a class="lnk ref"><svg class="badge badge-row"><rect width="100%" height="100%" rx="4" fill="url(#gTeal)"/><use href="#shield-soft"/></svg>MIS-2026-1001</a></td><td>web</td><td>https://app.client1.example</td><td>OWASP</td><td>Alice Moreau</td><td>23/03/2026</td><td>7</td><td>3</td><td>7.6</td><td>Injection SQL et XSS détec...</td></tr>
        </tbody>
      </table>
    </div>
  </main>
</div>
</body>
</html>
```

FILE: styles.css
```css
* { box-sizing: border-box; }
html, body { margin: 0; height: 100%; }
body {
  font-family: "Liberation Sans", Arial, sans-serif;
  color: #222;
  background: #fff;
  overflow: hidden;
}
svg { fill: currentColor; flex: none; }
a { color: inherit; text-decoration: none; }
.sprite { position: absolute; }
.stroked { fill: none; stroke: currentColor; stroke-width: 34; }

/* top bar */
.topbar {
  height: 68px;
  background: #263b5c;
  color: #fff;
  display: flex;
  justify-content: space-between;
  padding-left: 6px;
}
.topnav { display: flex; }
.topitem {
  position: relative;
  min-width: 87px;
  padding: 14px 8px 0;
  display: flex;
  flex-direction: column;
  align-items: center;
  font-size: 16.9px;
  line-height: 20px;
  color: #eef1f6;
  white-space: nowrap;
}
.topitem .ic { height: 17px; margin-bottom: 11px; color: #fff; }
.badge-nav { width: 26px; height: 26px; margin: -3px 0 5px; }
.is-current::after {
  content: "";
  position: absolute;
  left: 50%;
  bottom: 0;
  margin-left: -7px;
  border: 7px solid transparent;
  border-top: 0;
  border-bottom-color: #fff;
}
.toptools { display: flex; align-items: center; padding-right: 15px; }
.tool { height: 21px; width: 21px; margin-right: 9px; }
.tool + .avatar { margin-left: 9px; }
.avatar {
  width: 41px;
  height: 41px;
  border: 1px solid #51627f;
  border-radius: 50%;
  display: flex;
  align-items: center;
  justify-content: center;
}
.avatar-ic { height: 20px; }
.username { margin-left: 5px; font-size: 16.8px; color: #f2f4f8; }
.chev { width: 11px; height: 8px; margin-left: 10px; fill: none; stroke: #fff; stroke-width: 2; }

/* layout */
.shell { display: flex; height: calc(100% - 68px); }

/* sidebar */
.sidebar {
  width: 341px;
  flex: none;
  background: #f8f8f8;
  border-right: 2px solid #eee;
  padding: 34px 15px 0 13px;
  overflow: hidden;
}
.search {
  height: 50px;
  background: #fff;
  border: 2px solid #ddd;
  border-radius: 6px;
  display: flex;
  align-items: center;
  padding: 0 8px;
}
.search-ic { height: 20px; width: 20px; color: #aaa; }
.search-ph { margin-left: 14px; font-size: 19.6px; color: #aaa; flex: 1; position: relative; top: 1px; }
.search-caret {
  border: 5px solid transparent;
  border-bottom: 0;
  border-top: 8px solid #8a8a8a;
}
.sidelist { list-style: none; margin: 20.5px 0 0; padding: 0; }
.sidelist li { height: 60.3px; border-bottom: 2px solid #eee; }
.sidelink {
  height: 100%;
  display: flex;
  align-items: center;
  padding-left: 10px;
  font-size: 19.5px;
  font-weight: 700;
  color: #222;
  white-space: nowrap;
}
.sidebox { width: 30px; display: flex; align-items: center; color: #25d0ef; }
.sidebox svg { height: 20px; }

/* content */
.content { flex: 1; min-width: 0; padding: 26px 0 0 59px; overflow: hidden; }
.tabpanel {
  width: 2980px;
  display: flex;
  flex-wrap: wrap;
  gap: 8px 9px;
  padding: 10px 12px 10px;
  border: 2px solid #e4eaf3;
  border-radius: 20px;
  background: linear-gradient(90deg, #e9fcff 0%, #eef8ff 55%, #edfbf9 100%);
}
.tab {
  display: flex;
  align-items: center;
  gap: 9px;
  min-height: 40px;
  padding: 0 14px;
  background: #fff;
  border: 2px solid #e5ebf3;
  border-radius: 14px;
  font-size: 16.25px;
  font-weight: 700;
  color: #2e384d;
  white-space: nowrap;
}
.tab svg { height: 16px; color: #4f5b70; }
.tab-active {
  min-height: 42px;
  border-color: transparent;
  color: #fff;
  background: linear-gradient(90deg, #0f2540 0%, #0e7189 100%) border-box;
  box-shadow: 0 5px 14px rgba(30, 160, 200, .35);
}
.tab-active svg { color: #e8edf2; }

.titlerow { display: flex; align-items: center; margin: 39px 0 0 2px; height: 40px; }
.badge-title { width: 40px; height: 40px; }
.title { margin: 0 0 0 15px; font-size: 21.7px; font-weight: 400; color: #757a80; }
.count { margin-left: 14px; font-size: 19.6px; color: #757a80; }

/* table */
.tablewrap {
  width: 2502px;
  margin-top: 34px;
  border: 1px solid #ddd;
  border-top-width: 2px;
  border-bottom-width: 2px;
  border-radius: 8px;
  overflow: hidden;
}
.datatable {
  width: 2500px;
  table-layout: fixed;
  border-collapse: separate;
  border-spacing: 0;
  font-size: 19.65px;
  white-space: nowrap;
}
.c1 { width: 170px; } .c2 { width: 290px; } .c3 { width: 159px; } .c4 { width: 197px; }
.c5 { width: 160px; } .c6 { width: 274px; } .c7 { width: 150px; } .c8 { width: 143px; }
.c9 { width: 159px; } .c10 { width: 161px; } .c11 { width: 159px; } .c12 { width: 160px; }
.c13 { width: 318px; }
.datatable td, .datatable th { padding: 0 0 0 16px; text-align: left; vertical-align: middle; }
.filters td { height: 52px; background: #f0f0f2; padding-top: 10px; vertical-align: top; }
.filter {
  display: block;
  width: 129px;
  height: 35px;
  border: 0;
  border-radius: 5px;
  background: #fff;
  padding: 0;
}
.labels th {
  height: 58px;
  padding-bottom: 2px;
  background: #f0f0f2;
  border-bottom: 2px solid #d8d8dc;
  font-weight: 400;
  color: #4a4f80;
}
tbody td { height: 64px; padding-top: 2px; border-bottom: 2px solid #eee; color: #222; }
tbody tr:nth-child(odd) td { background: #fbfbfb; }
tbody tr:last-child td { border-bottom: 0; }
.lnk { color: #181f68; }
.ref { display: flex; align-items: center; gap: 10px; }
.badge-row { width: 21px; height: 20px; }
```
